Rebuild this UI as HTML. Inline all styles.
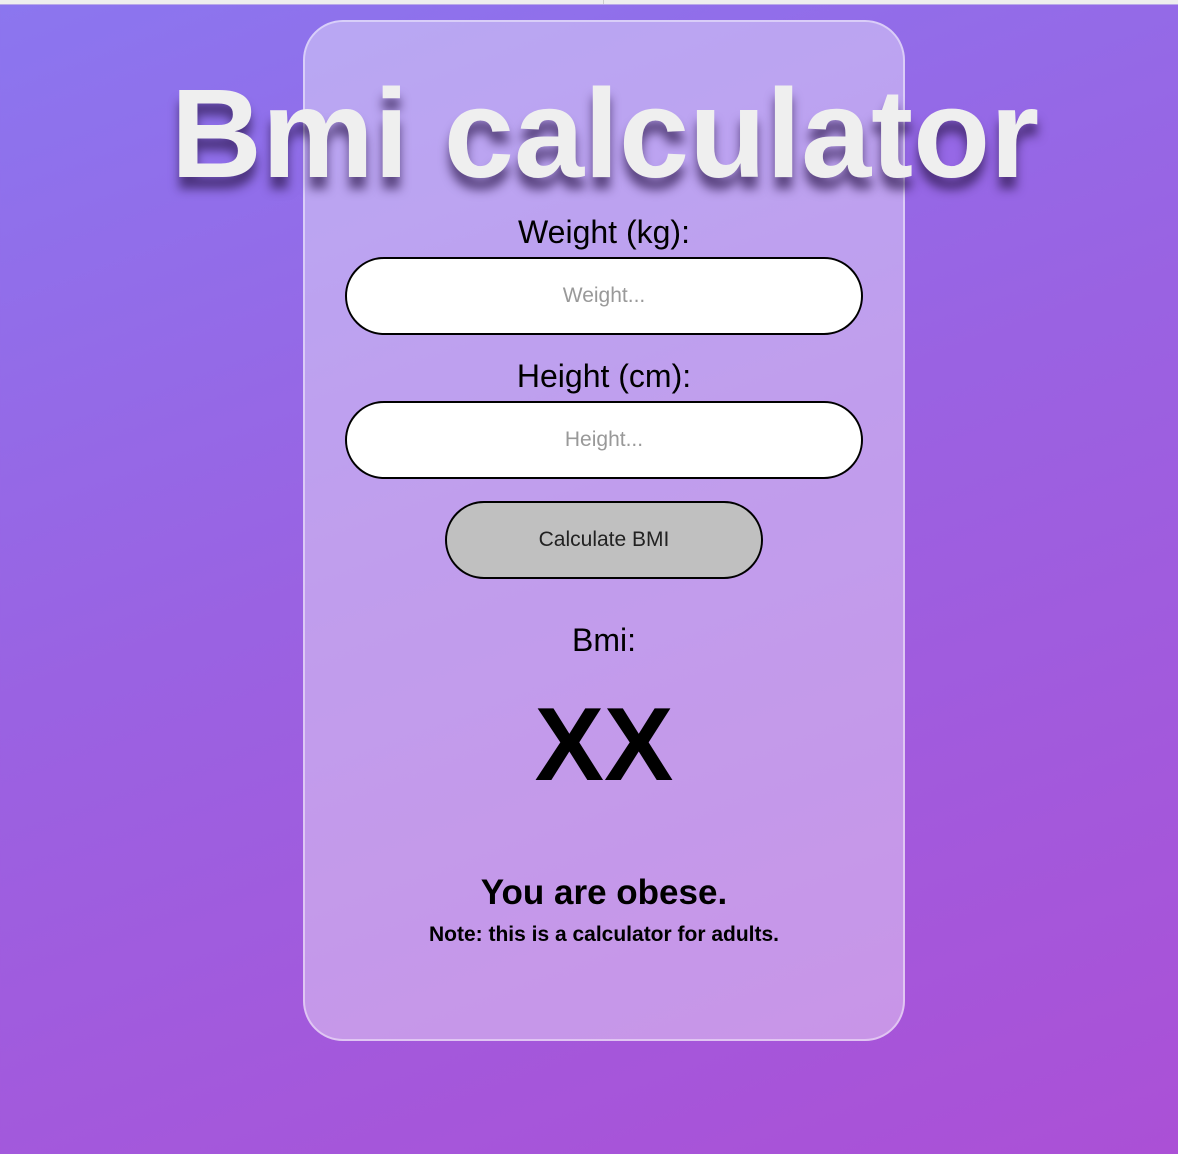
<!DOCTYPE html>
<html><head><style>
html,body{margin:0;width:1178px;height:1154px;overflow:hidden}
body{background:linear-gradient(160deg,#8b76ef 0%,#9a62e2 45%,#ab50d6 100%);font-family:"Liberation Sans",sans-serif;position:relative}
.top{position:absolute;left:0;top:0;width:1178px;height:4px;background:#eeeeee;border-bottom:1px solid #b9a9e8}
.top:after{content:"";position:absolute;left:603px;top:0;width:1px;height:4px;background:#ccc}
.card{position:absolute;left:303px;top:20px;width:598px;height:1017px;border:2px solid rgba(255,255,255,.45);border-radius:40px;background:rgba(255,255,255,.38)}
h1{position:absolute;left:16px;width:1178px;top:44px;margin:0;text-align:center;font-size:126px;font-weight:bold;color:#efefef;text-shadow:0 12px 10px rgba(40,20,70,.65);letter-spacing:0;line-height:180px}
.lbl{position:absolute;left:303px;width:602px;text-align:center;font-size:32px;color:#000}
.inp{position:absolute;left:345px;width:514px;height:74px;border:2px solid #000;border-radius:40px;background:#fff;text-align:center;line-height:74px;font-size:21px;color:#999}
.btn{position:absolute;left:445px;top:501px;width:314px;height:74px;border:2px solid #000;border-radius:40px;background:#c0c0c0;text-align:center;line-height:74px;font-size:21px;color:#222}
</style></head><body>
<div class="top"></div>
<div class="card"></div>
<h1>Bmi calculator</h1>
<div class="lbl" style="top:214px">Weight (kg):</div>
<div class="inp" style="top:257px">Weight...</div>
<div class="lbl" style="top:358px">Height (cm):</div>
<div class="inp" style="top:401px">Height...</div>
<div class="btn">Calculate BMI</div>
<div class="lbl" style="top:622px">Bmi:</div>
<div class="lbl" style="top:692px;font-size:104px;font-weight:bold;line-height:106px">XX</div>
<div class="lbl" style="top:873px;font-size:35px;font-weight:bold">You are obese.</div>
<div class="lbl" style="top:923px;font-size:21px;font-weight:bold">Note: this is a calculator for adults.</div>
</body></html>
